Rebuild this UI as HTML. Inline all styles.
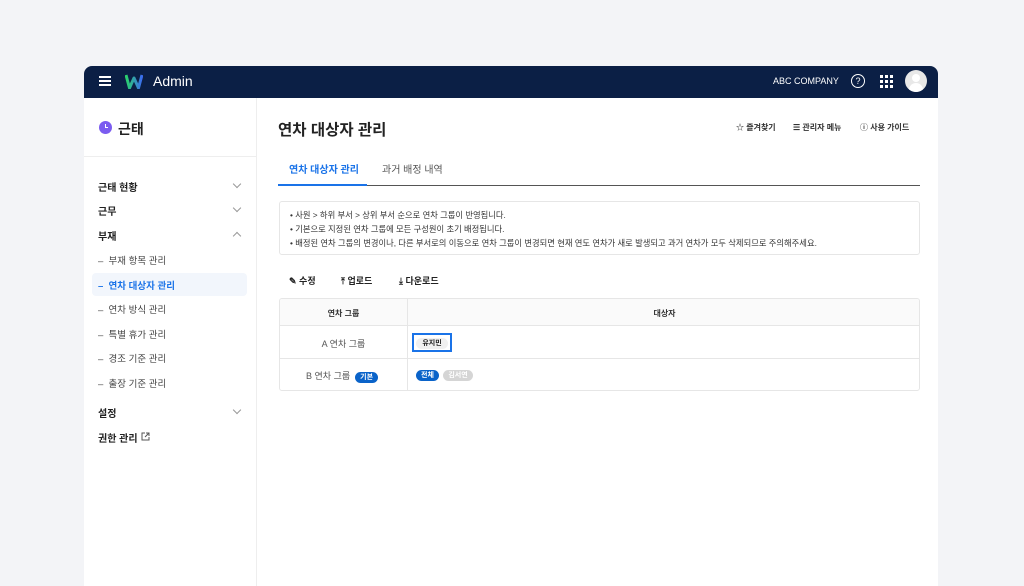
<!DOCTYPE html>
<html><head><meta charset="utf-8"><style>
*{box-sizing:border-box;margin:0;padding:0}
body{width:1024px;height:573px;background:#f3f4f7;font-family:"Liberation Sans","Noto Sans CJK KR",sans-serif;color:#222;position:relative;overflow:hidden}
.card{position:absolute;left:84px;top:66px;width:854px;height:520px;background:#fff;border-radius:8px 8px 0 0;overflow:hidden}
.hdr{height:32px;background:#0b1f45;position:relative;color:#fff}
.abs{position:absolute}
.side{position:absolute;left:0;top:32px;width:173px;bottom:0;border-right:1px solid #eee}
.mi{position:absolute;left:14px;font-size:10px;font-weight:bold;color:#222}
.chev{position:absolute;left:150px;width:6px;height:6px;border-right:1px solid #999;border-bottom:1px solid #999;transform:rotate(45deg)}
.sub{position:absolute;left:14px;font-size:9.5px;color:#444}
.t{font-size:9px;color:#333}
.badge{display:inline-block;font-size:7px;font-weight:bold;border-radius:8px;padding:1px 5px;line-height:9px}
.act{position:absolute;top:56px;font-size:8px;font-weight:bold;color:#333}
.tb{position:absolute;top:208px;font-size:9px;font-weight:bold}
</style></head><body>
<div class="card">
 <div class="hdr">
  <div class="abs" style="left:15px;top:10px;width:12px;height:2px;background:#fff;box-shadow:0 4px 0 #fff,0 8px 0 #fff"></div>
  <svg class="abs" style="left:41px;top:8px" width="18" height="15" viewBox="0 0 18 15"><path d="M1 1 L4.5 14 L9 4 L13.5 14 L17 1" fill="none" stroke="url(#g)" stroke-width="3" stroke-linejoin="round"/><defs><linearGradient id="g"><stop offset="0" stop-color="#2ad36a"/><stop offset="1" stop-color="#3b6cf0"/></linearGradient></defs></svg>
  <div class="abs" style="left:69px;top:7px;font-size:14px">Admin</div>
  <div class="abs" style="left:689px;top:10px;font-size:9px">ABC COMPANY</div>
  <div class="abs" style="left:767px;top:8px;width:14px;height:14px;border:1.3px solid #fff;border-radius:50%;font-size:9px;text-align:center;line-height:12px">?</div>
  <div class="abs" style="left:796px;top:9px;width:2.5px;height:2.5px;background:#fff;box-shadow:5px 0 #fff,10px 0 #fff,0 5px #fff,5px 5px #fff,10px 5px #fff,0 10px #fff,5px 10px #fff,10px 10px #fff"></div>
  <div class="abs" style="left:821px;top:4px;width:22px;height:22px;border-radius:50%;background:#e8e8e8;overflow:hidden"><div class="abs" style="left:7px;top:4px;width:8px;height:8px;border-radius:50%;background:#fff"></div><div class="abs" style="left:4px;top:13px;width:14px;height:10px;border-radius:7px 7px 0 0;background:#fff"></div></div>
 </div>
 <div class="side">
  <div class="abs" style="left:15px;top:23px;width:13px;height:13px;border-radius:50%;background:#7b5cf0"><div class="abs" style="left:6px;top:3px;width:3px;height:4px;border-left:1.3px solid #fff;border-bottom:1.3px solid #fff"></div></div>
  <div class="abs" style="left:34px;top:21px;font-size:14px;font-weight:bold">근태</div>
  <div class="abs" style="left:0;top:58px;width:173px;height:1px;background:#eee"></div>
  <div class="mi" style="top:81px">근태 현황</div><div class="chev" style="top:83px"></div>
  <div class="mi" style="top:105px">근무</div><div class="chev" style="top:107px"></div>
  <div class="mi" style="top:130px">부재</div><div class="chev" style="top:135px;transform:rotate(225deg)"></div>
  <div class="abs" style="left:8px;top:175px;width:155px;height:23px;background:#f2f6fc;border-radius:4px"></div>
  <div class="sub" style="top:155px">–&nbsp; 부재 항목 관리</div>
  <div class="sub" style="top:180px;color:#1a73e8;font-weight:bold">–&nbsp; 연차 대상자 관리</div>
  <div class="sub" style="top:204px">–&nbsp; 연차 방식 관리</div>
  <div class="sub" style="top:229px">–&nbsp; 특별 휴가 관리</div>
  <div class="sub" style="top:253px">–&nbsp; 경조 기준 관리</div>
  <div class="sub" style="top:278px">–&nbsp; 출장 기준 관리</div>
  <div class="mi" style="top:307px">설정</div><div class="chev" style="top:309px"></div>
  <div class="mi" style="top:332px">권한 관리</div>
  <svg class="abs" style="left:57px;top:334px" width="9" height="9" viewBox="0 0 9 9"><path d="M4 1H1V8H8V5M5 1H8V4M8 1L4 5" fill="none" stroke="#555" stroke-width="1"/></svg>
 </div>
 <div class="abs" style="left:194px;top:52px;font-size:15.5px;font-weight:bold">연차 대상자 관리</div>
 <div class="act" style="left:652px">☆ 즐겨찾기</div>
 <div class="act" style="left:709px">☰ 관리자 메뉴</div>
 <div class="act" style="left:776px">ⓘ 사용 가이드</div>
 <div class="abs" style="left:205px;top:95px;font-size:10px;font-weight:bold;color:#1a73e8">연차 대상자 관리</div>
 <div class="abs" style="left:298px;top:95px;font-size:10px;color:#555">과거 배정 내역</div>
 <div class="abs" style="left:194px;top:119px;width:642px;height:1px;background:#555"></div>
 <div class="abs" style="left:194px;top:118px;width:89px;height:2px;background:#1a73e8"></div>
 <div class="abs" style="left:195px;top:135px;width:641px;height:54px;border:1px solid #e6e6e6;border-radius:3px;padding:6px 10px;font-size:8.3px;line-height:14px;color:#333">
  • 사원 &gt; 하위 부서 &gt; 상위 부서 순으로 연차 그룹이 반영됩니다.<br>• 기본으로 지정된 연차 그룹에 모든 구성원이 초기 배정됩니다.<br>• 배정된 연차 그룹의 변경이나, 다른 부서로의 이동으로 연차 그룹이 변경되면 현재 연도 연차가 새로 발생되고 과거 연차가 모두 삭제되므로 주의해주세요.
 </div>
 <div class="tb" style="left:205px">✎ 수정</div>
 <div class="tb" style="left:257px">⤒ 업로드</div>
 <div class="tb" style="left:315px">⤓ 다운로드</div>
 <div class="abs" style="left:195px;top:232px;width:641px;height:93px;border:1px solid #e6e6e6;border-radius:3px;overflow:hidden">
  <div class="abs" style="left:0;top:0;width:641px;height:27px;background:#fafafa;border-bottom:1px solid #e6e6e6"></div>
  <div class="abs" style="left:0;top:59px;width:641px;height:1px;background:#e6e6e6"></div>
  <div class="abs" style="left:127px;top:0;width:1px;height:93px;background:#e6e6e6"></div>
  <div class="abs t" style="left:0;width:127px;text-align:center;top:9px;font-weight:bold;font-size:8px">연차 그룹</div>
  <div class="abs t" style="left:128px;width:513px;text-align:center;top:9px;font-weight:bold;font-size:8px">대상자</div>
  <div class="abs t" style="left:0;width:127px;text-align:center;top:38px;color:#555">A 연차 그룹</div>
  <div class="abs t" style="left:26px;top:70px;color:#555">B 연차 그룹 &nbsp;<span class="badge" style="background:#0a63c9;color:#fff">기본</span></div>
  <div class="abs" style="left:132px;top:34px;width:40px;height:19px;border:2px solid #1a73e8;padding:3px 2px"><span class="badge" style="background:#f0f0f0;color:#222;display:block;text-align:center;padding:1px 0">유지민</span></div>
  <div class="abs" style="left:136px;top:65px"><span class="badge" style="background:#0a63c9;color:#fff">전체</span> <span class="badge" style="background:#d5d5d5;color:#fff">김서연</span></div>
 </div>
</div>
</body></html>
